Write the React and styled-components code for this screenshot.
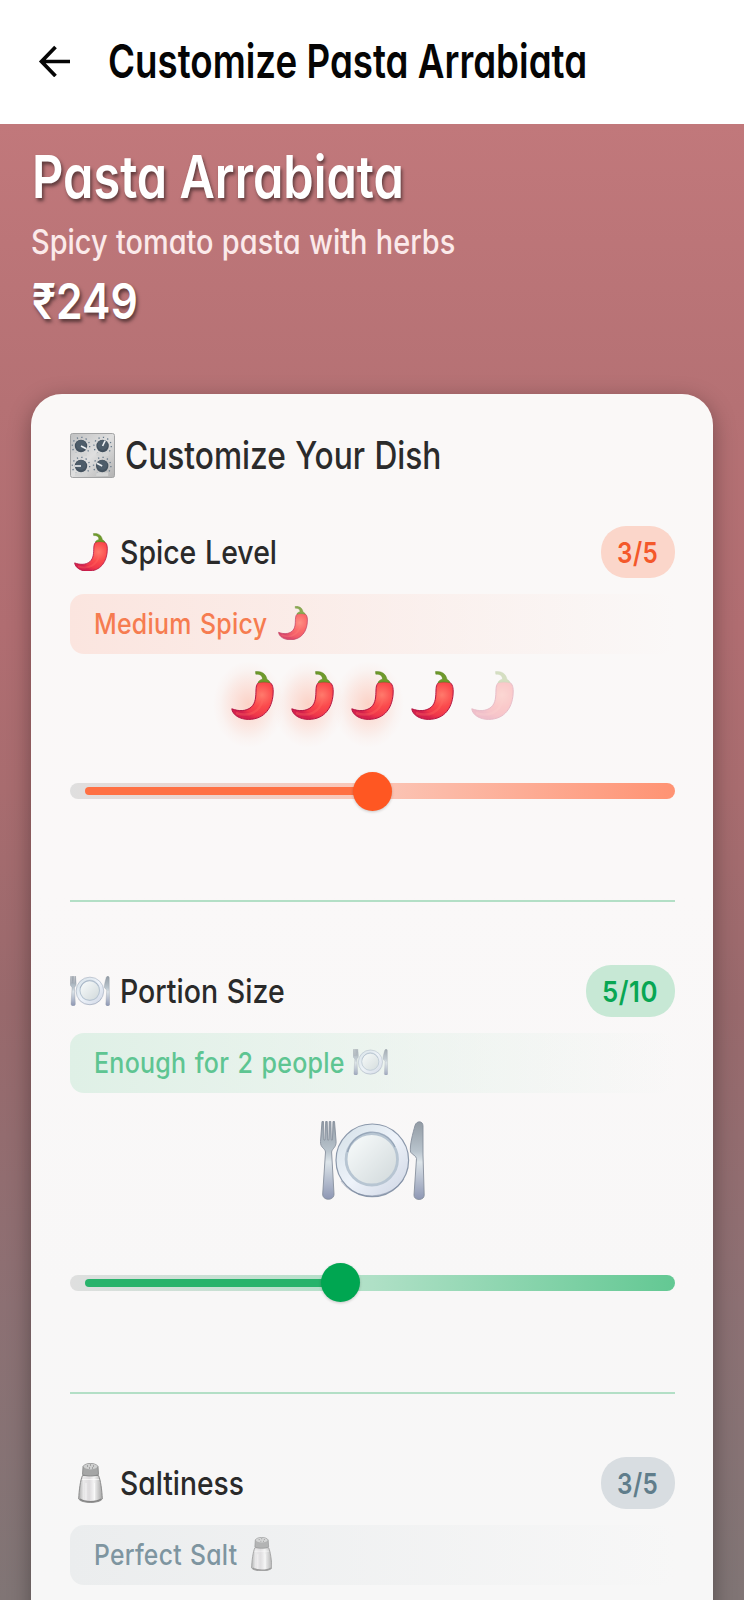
import React, { useLayoutEffect, useRef } from "react";
import styled, { createGlobalStyle } from "styled-components";

const GlobalStyle = createGlobalStyle`
  *, *::before, *::after { box-sizing: border-box; }
  html, body { margin: 0; background: #7a7272; }
  body {
    height: 1600px;
    overflow: hidden;
    font-family: Inter, Lato, "Liberation Sans", sans-serif;
    font-feature-settings: "cv11" 1;
  }
  svg { display: block; flex: none; }
`;

const Screen = styled.div`
  width: 744px;
  height: 1600px;
  overflow: hidden;
  display: flex;
  flex-direction: column;
`;

const TopBar = styled.header`
  flex: none;
  height: 124px;
  padding: 0 0 2px 38px;
  display: flex;
  align-items: center;
  background: #fff;
  color: #050505;
`;

const TopTitle = styled.h1`
  margin: 0 0 0 36px;
  font-size: 47px;
  line-height: 60px;
  font-weight: 600;
`;

const Page = styled.main`
  flex: 1;
  min-height: 0;
  padding: 22px 31px 0;
  background: linear-gradient(180deg, #c1787b 0%, #b57174 19%, #b06d71 34%, #a86c6f 45%, #98696c 60%, #8c7073 80%, #807575 100%);
`;

const Hero = styled.section`
  height: 248px;
  color: #fff;
`;

const DishName = styled.h2`
  margin: 0 0 12px 1px;
  font-size: 59px;
  line-height: 62px;
  font-weight: 600;
  text-shadow: 2px 3px 4px rgba(0, 0, 0, 0.5);
`;

const DishText = styled.p`
  margin: 0 0 11.5px 0;
  font-size: 33.5px;
  line-height: 44px;
  font-weight: 550;
  word-spacing: 0.02em;
  color: #fbeaea;
`;

const Price = styled.p`
  margin: 0 0 0 1px;
  font-size: 50px;
  line-height: 50px;
  font-weight: 600;
  text-shadow: 2px 3px 4px rgba(0, 0, 0, 0.5);
`;

const Card = styled.section`
  height: 1400px;
  padding: 38px 38.5px 0;
  border-radius: 31px;
  background: linear-gradient(180deg, #faf8f7 0, #faf8f8 500px, #f8f7f7 900px, #f7f7f7 1200px);
  box-shadow: 0 6px 22px rgba(0, 0, 0, 0.34);
`;

const CardTitle = styled.h3`
  margin: 0 0 48px;
  height: 46px;
  display: flex;
  align-items: center;
  gap: 10px;
  font-size: 38px;
  line-height: 46px;
  font-weight: 550;
  word-spacing: 0.03em;
  color: #2b2b2b;
`;

const SectionHead = styled.div`
  height: 52px;
  display: flex;
  align-items: center;
`;

const IconSlot = styled.span`
  width: 50px;
  padding-left: ${(p) => p.$inset}px;
  flex: none;
`;

const SectionTitle = styled.h4`
  margin: 0 auto 0 0;
  font-size: 33px;
  line-height: 52px;
  font-weight: 550;
  word-spacing: 0.04em;
  color: #2a2a2a;
`;

const Badge = styled.span`
  height: 52px;
  padding: 0 17px 0 16px;
  display: flex;
  align-items: center;
  border-radius: 25px;
  background: ${(p) => p.$bg};
  color: ${(p) => p.$color};
  font-size: 29px;
  font-weight: 600;
  letter-spacing: 0.02em;
`;

const Label = styled.div`
  height: 60px;
  margin-top: 15.5px;
  padding: 0 0 1px 24px;
  display: flex;
  align-items: center;
  gap: ${(p) => p.$gap}px;
  border-radius: 14px;
  background: linear-gradient(90deg, ${(p) => p.$bg}, transparent);
  color: ${(p) => p.$color};
  font-size: 28.5px;
  font-weight: 550;
  letter-spacing: 0.01em;
  word-spacing: 0.06em;

  svg { opacity: 0.8; }
`;

const Visual = styled.div`
  height: ${(p) => p.$height}px;
  padding-top: ${(p) => p.$top}px;
  display: flex;
  justify-content: center;
  align-items: flex-start;
  gap: 17px;
`;

const Pip = styled.span`
  position: relative;
  opacity: ${(p) => (p.$off ? 0.26 : 1)};

  &::before {
    content: "";
    display: ${(p) => (p.$glow ? "block" : "none")};
    position: absolute;
    inset: -10px -10px -28px -18px;
    background: radial-gradient(closest-side, rgba(255, 130, 95, 0.32), rgba(255, 130, 95, 0.15) 50%, rgba(255, 130, 95, 0.04) 80%, transparent);
  }

  svg { position: relative; }
`;

const SliderBox = styled.div`
  height: 39px;
  display: flex;
  align-items: center;
`;

const Track = styled.div`
  position: relative;
  width: 100%;
  height: 16px;
  border-radius: 8px;
  background: linear-gradient(90deg, #dfdfdf 0, ${(p) => p.$mid} 50%, ${(p) => p.$end} 100%);
`;

const Fill = styled.div`
  position: absolute;
  left: 15.5px;
  top: 4px;
  height: 8px;
  border-radius: 4px;
  background: ${(p) => p.$color};
`;

const Thumb = styled.div`
  position: absolute;
  top: -11.5px;
  width: 39px;
  height: 39px;
  margin-left: -19.5px;
  border-radius: 50%;
  background: ${(p) => p.$color};
  box-shadow: 0 1px 3px rgba(0, 0, 0, 0.2);
`;

const Divider = styled.hr`
  height: 2px;
  margin: ${(p) => p.$above}px 0 63px;
  border: 0;
  background: #b3dfc6;
`;

const FitBox = styled.span`
  display: block;
  width: ${(p) => p.$width}px;
  flex: none;
  white-space: nowrap;
`;

const FitInner = styled.span`
  display: inline-block;
  transform-origin: 0 50%;
`;

/* Condenses a line of text to the given width. */
function Fit({ width, children }) {
  const ref = useRef(null);
  useLayoutEffect(() => {
    const el = ref.current;
    el.style.transform = `scaleX(${width / el.offsetWidth})`;
  }, [width, children]);
  return (
    <FitBox $width={width}>
      <FitInner ref={ref}>{children}</FitInner>
    </FitBox>
  );
}

function BackArrow() {
  return (
    <svg width="34" height="32" viewBox="0 0 34 32" fill="none" stroke="#050505" strokeWidth="3.7">
      <path d="M32 16.500H3.500M17.500 2 3.500 16.500l14 14.500" />
    </svg>
  );
}

function Chili({ width = 43 }) {
  return (
    <svg width={width} height={(width * 49) / 43} viewBox="0 0 43 49">
      <defs>
        <radialGradient id="chiliBody" gradientUnits="userSpaceOnUse" cx="31" cy="24" r="26">
          <stop offset="0" stopColor="#ff7a6c" />
          <stop offset=".45" stopColor="#fb4a4c" />
          <stop offset=".8" stopColor="#f0384a" />
          <stop offset="1" stopColor="#d5214c" />
        </radialGradient>
      </defs>
      <path d="M.8 37.800C8 40.500 15 40.300 20 36.300 25 32 24.800 25 25 19c.1-4 1-7.500 4.500-8.300h7.500c4 .8 5.200 5 5.200 9.300C42.200 36 34 48.400 17.500 48.400 9 48.400 1.500 44 .8 37.800Z" fill="url(#chiliBody)" stroke="#b31543" strokeWidth="1" />
      <path d="M5 42c13 4.500 24-1 27-14" fill="none" stroke="#ff6a60" strokeWidth="2.500" opacity=".35" />
      <path d="M24.500 .6C31 0 35 3 36 8.500c1.500 .5 2.500 1.700 3 3.200-4-1-8-1-12 0 .5-2 2.500-3 4.500-3.500C31.500 4.500 29 3 24.800 3.200Z" fill="#6f9a2b" stroke="#56801f" strokeWidth=".5" />
    </svg>
  );
}

function Plate({ width = 105 }) {
  return (
    <svg width={width} height={(width * 79) / 105} viewBox="0 0 105 79">
      <defs>
        <linearGradient id="plateRim" x1="0" y1="0" x2="1" y2="1">
          <stop offset="0" stopColor="#d3dfe6" />
          <stop offset=".5" stopColor="#eef3fa" />
          <stop offset="1" stopColor="#cdd4e3" />
        </linearGradient>
        <linearGradient id="plateWell" x1="0" y1="0" x2="1" y2="1">
          <stop offset="0" stopColor="#fafdfd" />
          <stop offset="1" stopColor="#d0d8da" />
        </linearGradient>
        <linearGradient id="plateSteel" x1="0" y1="0" x2="0" y2="1">
          <stop offset="0" stopColor="#929ba4" />
          <stop offset=".38" stopColor="#b9c4cd" />
          <stop offset=".52" stopColor="#dce4e9" />
          <stop offset="1" stopColor="#8d96b3" />
        </linearGradient>
      </defs>
      <circle cx="52.300" cy="39.300" r="36.300" fill="url(#plateRim)" stroke="#8b98ab" strokeWidth="1.200" />
      <path d="M21 60c13 20 48 20 63-2" fill="none" stroke="#76829b" strokeWidth="1" opacity=".4" />
      <circle cx="51.800" cy="38.300" r="25.700" fill="url(#plateWell)" stroke="#b7c5d2" strokeWidth="2.800" />
      <path d="M27.500 31C34 7 65 4 75 26" fill="none" stroke="#8192a8" strokeWidth="1.400" opacity=".65" />
      <path d="M2 .5H3.500L4 19h1L5.700 .5h1.500l.5 18.500h1.100l.5-18.500h1.500l.5 18.500h1.100L13 .5h1.500l1.600 20c.3 6-4 7-4.500 10.500L14 73c.3 7-11.600 7-11.300 0L5.500 31C5 27 .2 27 .5 20.500Z" fill="url(#plateSteel)" stroke="#87909d" strokeWidth=".9" />
      <path d="M95 4.500c1.500-5 8-5 8 .5v29l1.200 40c0 6-10.300 6-10.200 0L96.500 37.500c-.5-3-4-3.500-6-6.500C89.500 24 93 12 95 4.500Z" fill="url(#plateSteel)" stroke="#87909d" strokeWidth=".9" />
    </svg>
  );
}

function Shaker({ width = 25 }) {
  return (
    <svg width={width} height={width * 1.6} viewBox="0 0 25 40">
      <defs>
        <linearGradient id="shakerGlass" x1="0" y1="0" x2="1" y2="0">
          <stop offset="0" stopColor="#aaa" />
          <stop offset=".2" stopColor="#e9e8e9" />
          <stop offset=".45" stopColor="#dddbdd" />
          <stop offset=".65" stopColor="#f5f5f5" />
          <stop offset="1" stopColor="#a5a5a5" />
        </linearGradient>
      </defs>
      <path d="M4.500 12.500h16c2 4 3.500 15 3.800 23.500-2.500 4.500-21 4.500-23.600 0C1 27.500 2.500 16.500 4.500 12.500Z" fill="url(#shakerGlass)" stroke="#8e8e8e" />
      <path d="M4 16.500h17M8 20v17M16.500 20v17" stroke="#fff" strokeWidth="1" opacity=".65" />
      <path d="M2 36c4 3.500 17 3.500 21 0" fill="none" stroke="#858585" strokeWidth="1.500" />
      <path d="M5 3.500C7-.5 18-.5 20 3.500l.5 8c-3 2-13 2-16 0Z" fill="#a5a6a6" stroke="#838484" strokeWidth=".8" />
      <ellipse cx="12.500" cy="3.600" rx="6.800" ry="2.800" fill="#cfd0d0" />
      <path d="M9 3h1M12 2h1M15 3h1M11 5h1M14 5h1" stroke="#777" strokeWidth="1" />
    </svg>
  );
}

const knobs = [
  [11, 13, 28],
  [32.6, 13, -65],
  [11, 33, 180],
  [32.2, 33, 208],
];

function ControlKnobs() {
  return (
    <svg width="45" height="45" viewBox="0 0 45 45">
      <defs>
        <linearGradient id="knobPanel" x1="0" y1="0" x2="1" y2="1">
          <stop offset="0" stopColor="#c0c1c2" />
          <stop offset=".5" stopColor="#dfdfdf" />
          <stop offset="1" stopColor="#b2b2b2" />
        </linearGradient>
      </defs>
      <rect x=".5" y=".5" width="44" height="44" rx="2" fill="url(#knobPanel)" stroke="#a3a4a5" />
      {knobs.map(([x, y, a]) => (
        <g key={`${x}-${y}`} transform={`translate(${x} ${y})`}>
          <circle r="8.700" fill="none" stroke="#65788a" strokeWidth="1.300" strokeDasharray="1.300 3.256" />
          <rect x="-6" y="6.500" width="12" height="3.500" fill="#d4d5d5" />
          <circle r="6.200" fill="#43515e" />
          <circle cy="-1" r="5" fill="#4e5d6a" />
          <path d="M0 0H6" transform={`rotate(${a})`} stroke="#eef1f3" strokeWidth="1.600" />
        </g>
      ))}
    </svg>
  );
}

function Slider({ at, color, fill, mid, end }) {
  return (
    <SliderBox>
      <Track $mid={mid} $end={end}>
        <Fill $color={fill} style={{ width: at - 15.5 }} />
        <Thumb $color={color} style={{ left: at }} />
      </Track>
    </SliderBox>
  );
}

export default function App() {
  return (
    <Screen>
      <GlobalStyle />
      <TopBar>
        <BackArrow />
        <TopTitle><Fit width={479}>Customize Pasta Arrabiata</Fit></TopTitle>
      </TopBar>
      <Page>
        <Hero>
          <DishName><Fit width={372}>Pasta Arrabiata</Fit></DishName>
          <DishText><Fit width={424}>Spicy tomato pasta with herbs</Fit></DishText>
          <Price><Fit width={106}>₹249</Fit></Price>
        </Hero>
        <Card>
          <CardTitle>
            <ControlKnobs />
            <Fit width={316}>Customize Your Dish</Fit>
          </CardTitle>

          <SectionHead>
            <IconSlot $inset={4}><Chili width={34} /></IconSlot>
            <SectionTitle><Fit width={157}>Spice Level</Fit></SectionTitle>
            <Badge $bg="#fbd6ca" $color="#f4582a"><Fit width={41}>3/5</Fit></Badge>
          </SectionHead>
          <Label $bg="#fbe5df" $color="#f67c50" $gap={11}>
            <Fit width={173}>Medium Spicy</Fit>
            <Chili width={30} />
          </Label>
          <Visual $height={118} $top={17.5}>
            <Pip $glow><Chili /></Pip>
            <Pip $glow><Chili /></Pip>
            <Pip $glow><Chili /></Pip>
            <Pip><Chili /></Pip>
            <Pip $off><Chili /></Pip>
          </Visual>
          <Slider at={302.5} color="#ff5722" fill="#ff7043" mid="#fbc6b7" end="#ff9373" />
          <Divider $above={89.5} />

          <SectionHead>
            <IconSlot $inset={0.5}><Plate width={40} /></IconSlot>
            <SectionTitle><Fit width={165}>Portion Size</Fit></SectionTitle>
            <Badge $bg="#c7e8d5" $color="#08a653"><Fit width={56}>5/10</Fit></Badge>
          </SectionHead>
          <Label $bg="#dff0e6" $color="#5ec592" $gap={8}>
            <Fit width={251}>Enough for 2 people</Fit>
            <Plate width={35} />
          </Label>
          <Visual $height={170.5} $top={28}><Plate /></Visual>
          <Slider at={270.5} color="#00a651" fill="#28b36b" mid="#afe0c6" end="#63c893" />
          <Divider $above={90} />

          <SectionHead>
            <IconSlot $inset={8}><Shaker /></IconSlot>
            <SectionTitle><Fit width={124}>Saltiness</Fit></SectionTitle>
            <Badge $bg="#d8dde1" $color="#607d8b"><Fit width={41}>3/5</Fit></Badge>
          </SectionHead>
          <Label $bg="#ebedee" $color="#7e95a0" $gap={14}>
            <Fit width={143}>Perfect Salt</Fit>
            <Shaker width={21.5} />
          </Label>
        </Card>
      </Page>
    </Screen>
  );
}
